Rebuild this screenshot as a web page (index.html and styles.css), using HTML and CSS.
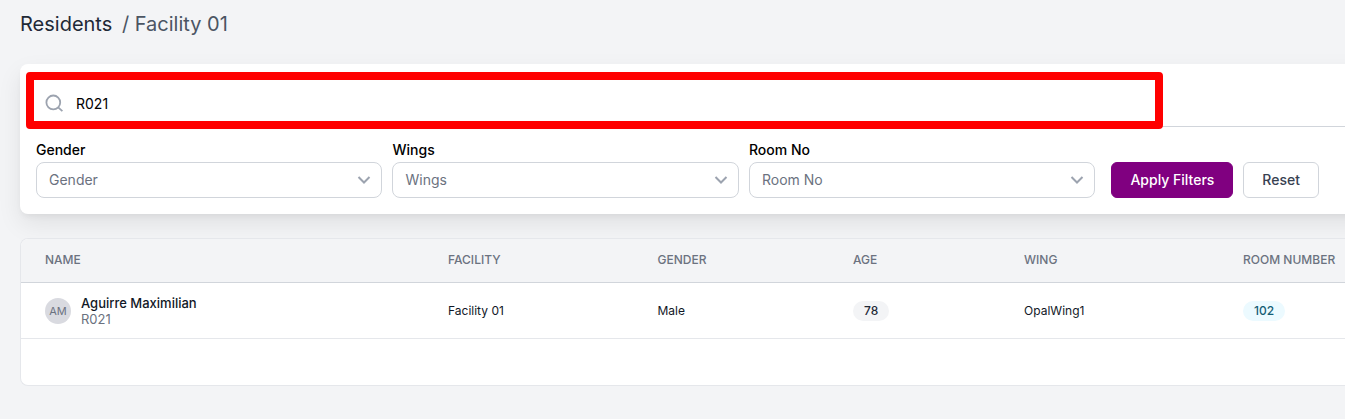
FILE: index.html
```html
<!DOCTYPE html>
<html lang="en">

<head>
  <meta charset="UTF-8">
  <meta name="viewport" content="width=device-width, initial-scale=1.0">
  <title>Residents</title>
  <link rel="stylesheet" href="styles.css">
</head>

<body>
  <h1 class="page-title">Residents <span>/ Facility 01</span></h1>

  <form class="filter-card">
    <div class="search">
      <svg class="search-icon" viewBox="0 0 20 20" aria-hidden="true">
        <circle cx="9.3" cy="9.4" r="6.9" />
        <path d="M14.2 14.3L18.4 18.2" />
      </svg>
      <input type="text" value="R021" aria-label="Search residents">
    </div>
    <div class="highlight"></div>

    <div class="filters">
      <div class="fields">
        <div class="field">
          <label for="gender">Gender</label>
          <div class="select-box">
            <select id="gender">
              <option>Gender</option>
            </select>
            <svg class="chevron" viewBox="0 0 14 10" aria-hidden="true"><path d="M1.5 2L7 7.5 12.5 2" /></svg>
          </div>
        </div>
        <div class="field">
          <label for="wings">Wings</label>
          <div class="select-box">
            <select id="wings">
              <option>Wings</option>
            </select>
            <svg class="chevron" viewBox="0 0 14 10" aria-hidden="true"><path d="M1.5 2L7 7.5 12.5 2" /></svg>
          </div>
        </div>
        <div class="field">
          <label for="room">Room No</label>
          <div class="select-box">
            <select id="room">
              <option>Room No</option>
            </select>
            <svg class="chevron" viewBox="0 0 14 10" aria-hidden="true"><path d="M1.5 2L7 7.5 12.5 2" /></svg>
          </div>
        </div>
      </div>
      <div class="actions">
        <button type="submit" class="btn btn-primary">Apply Filters</button>
        <button type="reset" class="btn">Reset</button>
      </div>
    </div>
  </form>

  <div class="table-card">
    <table>
      <thead>
        <tr>
          <th class="col-name">Name</th>
          <th class="col-facility">Facility</th>
          <th class="col-gender">Gender</th>
          <th class="col-age">Age</th>
          <th class="col-wing">Wing</th>
          <th class="col-room">Room Number</th>
        </tr>
      </thead>
      <tbody>
        <tr>
          <td>
            <div class="resident">
              <span class="avatar">AM</span>
              <div>
                <div class="resident-name">Aguirre Maximilian</div>
                <div class="resident-id">R021</div>
              </div>
            </div>
          </td>
          <td>Facility 01</td>
          <td>Male</td>
          <td><span class="badge">78</span></td>
          <td>OpalWing1</td>
          <td class="col-room"><span class="badge badge-room">102</span></td>
        </tr>
      </tbody>
    </table>
  </div>
</body>

</html>
```
FILE: styles.css
```css
* {
  box-sizing: border-box;
}

body {
  font-family: Inter, "Liberation Sans", sans-serif;
  font-size: 14px;
  line-height: 20px;
  margin: 0;
  padding: 10px 0 0 20px;
  background-color: #f3f4f6;
  color: #111827;
  overflow-x: hidden;
}

.page-title {
  margin: 0 0 26px;
  font-size: 20px;
  line-height: 28px;
  font-weight: 400;
  color: #1f2937;
}

.page-title span {
  margin-left: 4px;
  color: #4b5563;
}

/* the card runs past the right edge of the window */
.filter-card {
  position: relative;
  margin-right: -40px;
  padding: 16px 0 16px 16px;
  background-color: white;
  border-radius: 8px;
  box-shadow: 0 10px 24px rgba(0, 0, 0, 0.08), 0 4px 6px -2px rgba(0, 0, 0, 0.06);
}

.search {
  display: flex;
  align-items: center;
  gap: 12px;
  height: 47px;
  padding-left: 8px;
  border-bottom: 1px solid #d1d5db;
}

.search-icon {
  width: 20px;
  height: 20px;
  fill: none;
  stroke: #9ca3af;
  stroke-width: 1.8;
}

.search input {
  flex: 1;
  padding: 2px 0 0;
  border: none;
  outline: none;
  background: none;
  font: inherit;
  color: black;
}

/* red marker drawn around the search box */
.highlight {
  position: absolute;
  top: 8px;
  left: 6px;
  right: 222px;
  height: 57px;
  border: 8px solid red;
  border-radius: 4px;
  pointer-events: none;
}

.filters {
  display: flex;
  align-items: flex-end;
  gap: 16px;
  margin-top: 13px;
  padding-right: 66px;
}

.fields {
  display: flex;
  flex: 1;
  gap: 10px;
}

.field {
  flex: 1;
}

.field label {
  display: block;
  margin-bottom: 2px;
  font-weight: 500;
  color: black;
}

.select-box {
  position: relative;
}

select {
  display: block;
  width: 100%;
  height: 36px;
  padding: 0 36px 0 12px;
  border: 1px solid #d1d5db;
  border-radius: 8px;
  background-color: white;
  font: inherit;
  color: #6b7280;
  appearance: none;
}

.chevron {
  position: absolute;
  top: 13px;
  right: 11px;
  width: 14px;
  height: 10px;
  fill: none;
  stroke: #9ca3af;
  stroke-width: 2;
  pointer-events: none;
}

.actions {
  display: flex;
  gap: 10px;
}

.btn {
  height: 36px;
  padding: 0 18px;
  border: 1px solid #d1d5db;
  border-radius: 6px;
  background-color: white;
  font: inherit;
  font-weight: 500;
  color: #374151;
  cursor: pointer;
}

.btn-primary {
  border-color: purple;
  background-color: purple;
  color: white;
}

.table-card {
  position: relative;
  margin-top: 24px;
  padding-bottom: 46px;
  border: 1px solid #e5e7eb;
  border-right: none;
  border-radius: 8px 0 0 8px;
  background-color: white;
  overflow: hidden;
}

table {
  width: 100%;
  table-layout: fixed;
  border-collapse: separate;
  border-spacing: 0;
  font-size: 12px;
  line-height: 16px;
}

th {
  height: 44px;
  padding: 0 24px 2px;
  border-bottom: 1px solid #d1d5db;
  background-color: #f3f4f6;
  font-weight: 500;
  color: #6b7280;
  text-align: left;
  text-transform: uppercase;
  white-space: nowrap;
}

td {
  height: 56px;
  padding: 0 24px;
  border-bottom: 1px solid #e5e7eb;
}

.col-name {
  width: 30.44%;
}

.col-facility {
  width: 15.82%;
}

.col-gender {
  width: 14.77%;
}

.col-age {
  width: 12.92%;
}

.col-wing {
  width: 16.54%;
}

.col-room {
  padding-right: 0;
}

.resident {
  display: flex;
  align-items: center;
  gap: 10px;
  font-size: 13px;
}

.resident-name {
  font-weight: 500;
}

.resident-id {
  color: #6b7280;
}

.avatar {
  width: 26px;
  height: 26px;
  border-radius: 50%;
  background-color: #d9dae0;
  font-size: 11px;
  line-height: 26px;
  color: #6b7280;
  text-align: center;
}

.badge {
  display: inline-block;
  padding: 2px 11px;
  border-radius: 10px;
  background-color: #f3f4f6;
  font-weight: 500;
  color: #1f2937;
}

.badge-room {
  background-color: #ecfaff;
  color: #155e75;
}
```
